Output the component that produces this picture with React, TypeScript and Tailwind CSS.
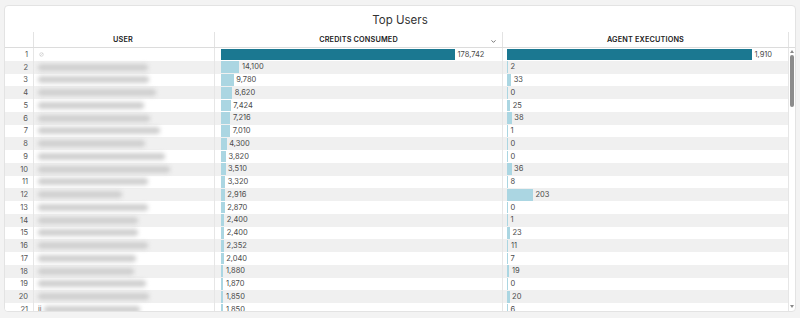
import { ChevronDown } from 'lucide-react'

interface Row {
  credits: number
  agents: number
  nameWidth: number
  prefix?: string
}

const rows: Row[] = [
  { credits: 178742, agents: 1910, nameWidth: 0 },
  { credits: 14100, agents: 2, nameWidth: 110 },
  { credits: 9780, agents: 33, nameWidth: 111 },
  { credits: 8620, agents: 0, nameWidth: 118 },
  { credits: 7424, agents: 25, nameWidth: 106 },
  { credits: 7216, agents: 38, nameWidth: 112 },
  { credits: 7010, agents: 1, nameWidth: 122 },
  { credits: 4300, agents: 0, nameWidth: 107 },
  { credits: 3820, agents: 0, nameWidth: 127 },
  { credits: 3510, agents: 36, nameWidth: 132 },
  { credits: 3320, agents: 8, nameWidth: 110 },
  { credits: 2916, agents: 203, nameWidth: 84 },
  { credits: 2870, agents: 0, nameWidth: 110 },
  { credits: 2400, agents: 1, nameWidth: 100 },
  { credits: 2400, agents: 23, nameWidth: 100 },
  { credits: 2352, agents: 11, nameWidth: 110 },
  { credits: 2040, agents: 7, nameWidth: 98 },
  { credits: 1880, agents: 19, nameWidth: 96 },
  { credits: 1870, agents: 0, nameWidth: 108 },
  { credits: 1850, agents: 20, nameWidth: 111 },
  { credits: 1850, agents: 6, nameWidth: 96, prefix: 'ji' },
  { credits: 1820, agents: 4, nameWidth: 104 },
]

const maxCredits = 178742
const maxAgents = 1910

const fmt = (n: number) => n.toLocaleString('en-US')

function Bar({ value, max, width, top }: { value: number; max: number; width: number; top: boolean }) {
  const w = Math.max(1, (value / max) * width)
  return (
    <div className="flex items-center h-full">
      <div
        className={top ? 'h-[11.75px] bg-[#1b7891] shrink-0' : 'h-[11.75px] bg-[#abd6e2] shrink-0'}
        style={{ width: w }}
      />
      <span className="ml-[2.5px] text-[7.5px] text-[#4a4a4a] leading-none whitespace-nowrap">{fmt(value)}</span>
    </div>
  )
}

export default function App() {
  return (
    <div className="w-[800px] h-[318px] bg-[#f3f3f3] pl-[4px] pr-[4px] pt-[5px] font-['Inter',sans-serif]">
      <div className="h-[307px] rounded-[4px] border border-[#e3e3e3] bg-white overflow-hidden flex flex-col">
        {/* Title */}
        <div className="h-[25.5px] shrink-0 flex items-center justify-center pt-[4px]">
          <span className="text-[11.5px] text-[#333]">Top Users</span>
        </div>

        {/* Header */}
        <div className="h-[16.5px] shrink-0 flex border-b border-[#dcdcdc] text-[7.3px] font-semibold text-[#222] tracking-[0.15px]">
          <div className="w-[29px] border-r border-[#e3e3e3]" />
          <div className="w-[181px] border-r border-[#e3e3e3] flex items-center justify-center pr-[2px] pt-[1.5px]">USER</div>
          <div className="w-[288px] border-r border-[#e3e3e3] flex items-center justify-center relative pt-[1.5px]">
            CREDITS CONSUMED
            <ChevronDown className="absolute right-[5px] top-[6px] text-[#444]" size={7} strokeWidth={2.5} />
          </div>
          <div className="w-[286px] border-r border-[#e3e3e3] flex items-center justify-center pt-[1.5px]">AGENT EXECUTIONS</div>
          <div className="flex-1" />
        </div>

        {/* Body */}
        <div className="flex-1 flex overflow-hidden">
          <div className="flex flex-col">
            {rows.map((r, i) => (
              <div
                key={i}
                className={i % 2 === 1 ? 'h-[12.75px] shrink-0 flex bg-[#f0f0f0]' : 'h-[12.75px] shrink-0 flex bg-white'}
              >
                <div className="w-[29px] border-r border-[#e6e6e6] flex items-center justify-end pr-[5px] text-[7.5px] text-[#555]">
                  {i + 1}
                </div>
                <div className="w-[181px] border-r border-[#e6e6e6] flex items-center pl-[4px]">
                  {i === 0 ? (
                    <svg width="5" height="5" viewBox="0 0 10 10" className="ml-[1px]">
                      <circle cx="5" cy="5" r="3.6" fill="none" stroke="#c4c4c4" strokeWidth="1.2" />
                      <line x1="2" y1="8" x2="8" y2="2" stroke="#c4c4c4" strokeWidth="1" />
                    </svg>
                  ) : (
                    <>
                      {r.prefix && <span className="text-[7.5px] text-[#666] mr-[2px]">{r.prefix}</span>}
                      <div
                        className="h-[7px] rounded-[3px] bg-[#cfcfcf] blur-[2.2px]"
                        style={{ width: r.nameWidth }}
                      />
                    </>
                  )}
                </div>
                <div className="w-[288px] border-r border-[#e6e6e6] pl-[6px] py-[0.5px]">
                  <Bar value={r.credits} max={maxCredits} width={234} top={i === 0} />
                </div>
                <div className="w-[286px] border-r border-[#e6e6e6] pl-[4px] py-[0.5px]">
                  <Bar value={r.agents} max={maxAgents} width={245} top={i === 0} />
                </div>
              </div>
            ))}
          </div>

          {/* Scrollbar */}
          <div className="flex-1 flex flex-col items-center pt-[2px] pb-[3px]">
            <svg width="4" height="3" viewBox="0 0 4 3">
              <polygon points="2,0 4,3 0,3" fill="#8a8a8a" />
            </svg>
            <div className="mt-[2px] w-[3.5px] h-[52px] rounded-full bg-[#8c8c8c]" />
            <div className="flex-1" />
            <svg width="4" height="3" viewBox="0 0 4 3">
              <polygon points="0,0 4,0 2,3" fill="#8a8a8a" />
            </svg>
          </div>
        </div>
      </div>
    </div>
  )
}
